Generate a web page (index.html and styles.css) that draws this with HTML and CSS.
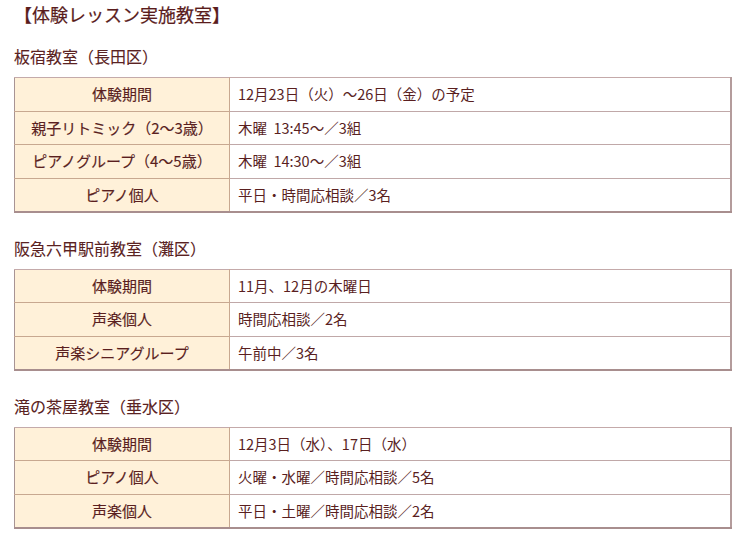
FILE: index.html
```html
<!DOCTYPE html>
<html lang="ja">
<head>
<meta charset="utf-8">
<link rel="stylesheet" href="styles.css">
</head>
<body>
<div class="page">
  <h1 class="title">【体験レッスン実施教室】</h1>

  <h2 class="school">板宿教室（長田区）</h2>
  <table class="lesson">
    <tr><th>体験期間</th><td>12月23日（火）〜26日（金）の予定</td></tr>
    <tr><th>親子リトミック（2〜3歳）</th><td>木曜&nbsp;&nbsp;13:45〜／3組</td></tr>
    <tr><th>ピアノグループ（4〜5歳）</th><td>木曜&nbsp;&nbsp;14:30〜／3組</td></tr>
    <tr><th>ピアノ個人</th><td>平日・時間応相談／3名</td></tr>
  </table>

  <h2 class="school">阪急六甲駅前教室（灘区）</h2>
  <table class="lesson">
    <tr><th>体験期間</th><td>11月、12月の木曜日</td></tr>
    <tr><th>声楽個人</th><td>時間応相談／2名</td></tr>
    <tr><th>声楽シニアグループ</th><td>午前中／3名</td></tr>
  </table>

  <h2 class="school">滝の茶屋教室（垂水区）</h2>
  <table class="lesson">
    <tr><th>体験期間</th><td>12月3日（水）、17日（水）</td></tr>
    <tr><th>ピアノ個人</th><td>火曜・水曜／時間応相談／5名</td></tr>
    <tr><th>声楽個人</th><td>平日・土曜／時間応相談／2名</td></tr>
  </table>
</div>
</body>
</html>
```

FILE: styles.css
```css
html, body {
  margin: 0;
  padding: 0;
  background: #ffffff;
}

body {
  font-family: "Noto Sans CJK JP", "Noto Sans", sans-serif;
  color: #5a1f1f;
}

.page {
  padding: 2px 18px 0 14px;
}

.title {
  margin: 0;
  font-size: 18px;
  line-height: 24px;
  font-weight: 400;
  color: #5a1c1c;
  -webkit-text-stroke: 0.2px #5a1c1c;
}

.school {
  margin: 18px 0 9px;
  font-size: 16px;
  line-height: 24px;
  font-weight: 400;
  color: #5a2222;
  -webkit-text-stroke: 0.1px #5a2222;
}

.lesson + .school {
  margin-top: 23px;
}

.lesson {
  width: 100%;
  border-collapse: collapse;
  border-left: 1px solid #a89494;
  border-top: 1px solid #c4aaaa;
  border-right: 2px solid #b49c9c;
  border-bottom: 2px solid #a88e8e;
  font-size: 15px;
}

.lesson th,
.lesson td {
  height: 33.5px;
  box-sizing: border-box;
  padding: 0 8px;
  line-height: 20px;
  vertical-align: middle;
}

.lesson th {
  width: 30%;
  background: #fff1d9;
  font-weight: 400;
  text-align: center;
  color: #5a1f1f;
  -webkit-text-stroke: 0.15px #5a1f1f;
  border-bottom: 1px solid #c8a890;
  border-right: 1px solid #c8a890;
}

.lesson td {
  background: #ffffff;
  text-align: left;
  font-size: 14.5px;
  border-bottom: 1px solid #c0a8a8;
}

.lesson tr:last-child th,
.lesson tr:last-child td {
  border-bottom: none;
}
```
